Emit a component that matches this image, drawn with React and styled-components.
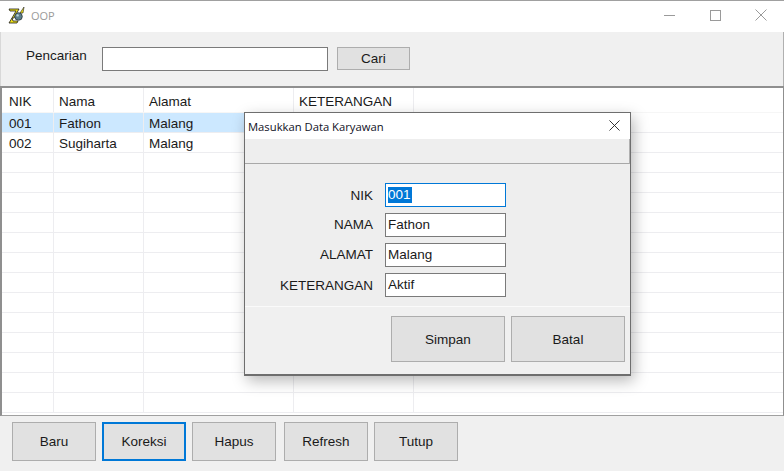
import React from "react";
import styled, { createGlobalStyle } from "styled-components";

const Global = createGlobalStyle`
  html, body { margin: 0; padding: 0; background: #fff; }
  #root { width: 784px; height: 471px; overflow: hidden; }
  * { box-sizing: border-box; }
`;

const Win = styled.div`
  position: relative;
  width: 784px;
  height: 471px;
  display: flex;
  flex-direction: column;
  background: #f0f0f0;
  border-top: 1px solid #a0a0a0;
  font: 13.5px "Liberation Sans", Arial, sans-serif;
  color: #1a1a1a;
  overflow: hidden;
`;
const TitleBar = styled.div`
  height: 31px;
  flex: none;
  background: #fff;
  display: flex;
  align-items: center;
  padding: 0 0 3px 8px;
`;
const AppTitle = styled.span`
  flex: 1;
  margin-left: 5px;
  font: 11px "Open Sans", sans-serif;
  color: #9a9a9a;
`;
const Caption = styled.button`
  width: ${(p) => p.$w || 46}px;
  height: 26px;
  flex: none;
  padding: 0;
  border: 0;
  background: transparent;
  display: flex;
  align-items: center;
  justify-content: center;
`;
const SearchBar = styled.div`
  height: 54px;
  flex: none;
  display: flex;
  align-items: flex-start;
  padding: 14px 0 0 25px;
  border-left: 1px solid #d8d8d8;
  border-right: 1px solid #b0b0b0;
`;
const SearchLabel = styled.label`
  width: 76px;
  line-height: 20px;
`;
const SearchInput = styled.div`
  width: 226px;
  height: 24px;
  margin-top: 1px;
  background: #fff;
  border: 1px solid #7a7a7a;
`;
const FlatButton = styled.button`
  width: ${(p) => p.$w}px;
  height: ${(p) => p.$h}px;
  flex: none;
  padding: 0;
  background: #e1e1e1;
  border: ${(p) => (p.$focus ? "2px solid #0078d7" : "1px solid #adadad")};
  font: 13.5px "Liberation Sans", Arial, sans-serif;
  color: #1a1a1a;
`;
const SearchButton = styled(FlatButton)`
  margin: 1px 0 0 9px;
`;
const Table = styled.div`
  height: 330px;
  flex: none;
  background: #fff;
  border-top: 2px solid #8f8f8f;
  border-left: 2px solid #8f8f8f;
  border-right: 1px solid #8f8f8f;
  border-bottom: 1px solid #a0a0a0;
  overflow: hidden;
`;
const Row = styled.div`
  display: grid;
  grid-template-columns: 52px 90px 150px 120px 1fr;
  height: ${(p) => (p.$head ? 25 : 20)}px;
  border-bottom: 1px solid ${(p) => (p.$head ? "#f6f6f6" : "#ededf0")};
`;
const Cell = styled.div`
  padding: ${(p) => (p.$head ? "4px 0 0 5px" : "2px 0 0 5px")};
  line-height: ${(p) => (p.$head ? "20px" : "18px")};
  border-right: 1px solid #ededf0;
  background: ${(p) => (p.$sel ? "#cce8ff" : "transparent")};
  white-space: nowrap;
  overflow: hidden;
  &:first-child { padding-left: 7px; }
  &:last-child { border-right: 0; background: transparent; }
`;
const BottomBar = styled.div`
  flex: 1;
  display: flex;
  align-items: flex-start;
  padding: 6px 0 0 12px;
  gap: 6px;
`;
const RefreshButton = styled(FlatButton)`
  margin-left: 2px;
`;

const Dialog = styled.div`
  position: absolute;
  left: 244px;
  top: 111px;
  width: 387px;
  height: 264px;
  background: #f0f0f0;
  border: 1px solid #6e6e6e;
  border-bottom-width: 2px;
  box-shadow: 3px 5px 14px rgba(0, 0, 0, 0.28);
  display: flex;
  flex-direction: column;
`;
const DialogTitle = styled.div`
  height: 26px;
  flex: none;
  background: #fff;
  display: flex;
  align-items: center;
  justify-content: space-between;
  padding: 0 0 0 3px;
  font: 11.25px "Open Sans", sans-serif;
  color: #10101e;
`;
const DialogClose = styled(Caption)`
  margin-bottom: 2px;
`;
const DialogBand = styled.div`
  height: 25px;
  flex: none;
  background: #eeeeee;
  border-bottom: 1px solid #a8a8a8;
  border-right: 1px solid #b0b0b0;
`;
const Form = styled.div`
  height: 143px;
  flex: none;
  padding: 19px 0 0 0;
  display: flex;
  flex-direction: column;
  gap: 6px;
  background: #eeeeee;
  border-bottom: 1px solid #fafafa;
`;
const Field = styled.div`
  display: flex;
  align-items: center;
  height: 24px;
`;
const FieldLabel = styled.label`
  width: 128px;
  text-align: right;
  padding-bottom: ${(p) => (p.$raised ? 2 : 0)}px;
`;
const FieldBox = styled.div`
  margin-left: 12px;
  width: 121px;
  height: 24px;
  background: #fff;
  border: 1px solid ${(p) => (p.$focus ? "#0078d7" : "#7a7a7a")};
  padding: 0 0 0 2px;
  line-height: 16px;
  display: flex;
  align-items: center;
`;
const Selected = styled.span`
  background: #0078d7;
  color: #fff;
  padding-right: 1px;
`;
const DialogActions = styled.div`
  flex: 1;
  display: flex;
  justify-content: flex-end;
  align-items: flex-start;
  gap: 6px;
  padding: 9px 5px 0 0;
  background: #f0f0f0;
`;

const cols = ["NIK", "Nama", "Alamat", "KETERANGAN", ""];
const rows = [
  ["001", "Fathon", "Malang", "", ""],
  ["002", "Sugiharta", "Malang", "", ""],
  ...Array.from({ length: 13 }, () => ["", "", "", "", ""]),
];
const fields = [
  ["NIK", "001", true],
  ["NAMA", "Fathon", false, true],
  ["ALAMAT", "Malang", false, true],
  ["KETERANGAN", "Aktif"],
];

const AppIcon = () => (
  <svg width="18" height="18" viewBox="0 0 18 18">
    <path d="M1 3h10l-5 9H4L8 5H2z" fill="#efe21a" stroke="#1c1c1c" strokeWidth="0.8" />
    <path d="M4 12l-3 5h8l1-2H5z" fill="#efe21a" stroke="#1c1c1c" strokeWidth="0.8" />
    <path d="M12 7l4-6-1 6z" fill="#efe21a" stroke="#1c1c1c" strokeWidth="0.6" />
    <circle cx="10.5" cy="10.5" r="3.8" fill="#5c7f8c" stroke="#2a3338" strokeWidth="0.8" />
    <circle cx="9.6" cy="9.4" r="1.2" fill="#b9d2da" />
  </svg>
);
const X = ({ color, size = 12 }) => (
  <svg width={size} height={size} viewBox="0 0 12 12">
    <path d="M.5.5l11 11M11.5.5l-11 11" stroke={color} fill="none" />
  </svg>
);

export default function App() {
  return (
    <Win>
      <Global />
      <TitleBar>
        <AppIcon />
        <AppTitle>OOP</AppTitle>
        <Caption $w={45}>
          <svg width="11" height="11" viewBox="0 0 11 11"><path d="M0 5.5h11" stroke="#9a9a9a" /></svg>
        </Caption>
        <Caption>
          <svg width="11" height="11" viewBox="0 0 11 11"><rect x=".5" y=".5" width="10" height="10" fill="none" stroke="#9a9a9a" /></svg>
        </Caption>
        <Caption>
          <X color="#9a9a9a" />
        </Caption>
      </TitleBar>
      <SearchBar>
        <SearchLabel>Pencarian</SearchLabel>
        <SearchInput />
        <SearchButton $w={73} $h={23}>Cari</SearchButton>
      </SearchBar>
      <Table>
        <Row $head>
          {cols.map((c, i) => <Cell $head key={i}>{c}</Cell>)}
        </Row>
        {rows.map((r, i) => (
          <Row key={i}>
            {r.map((c, j) => <Cell key={j} $sel={i === 0}>{c}</Cell>)}
          </Row>
        ))}
      </Table>
      <BottomBar>
        <FlatButton $w={84} $h={39}>Baru</FlatButton>
        <FlatButton $w={84} $h={39} $focus>Koreksi</FlatButton>
        <FlatButton $w={84} $h={39}>Hapus</FlatButton>
        <RefreshButton $w={84} $h={39}>Refresh</RefreshButton>
        <FlatButton $w={84} $h={39}>Tutup</FlatButton>
      </BottomBar>
      <Dialog>
        <DialogTitle>
          Masukkan Data Karyawan
          <DialogClose $w={31}><X color="#222" size={11} /></DialogClose>
        </DialogTitle>
        <DialogBand />
        <Form>
          {fields.map(([l, v, f, raised]) => (
            <Field key={l}>
              <FieldLabel $raised={raised}>{l}</FieldLabel>
              <FieldBox $focus={f}>{f ? <Selected>{v}</Selected> : v}</FieldBox>
            </Field>
          ))}
        </Form>
        <DialogActions>
          <FlatButton $w={114} $h={46}>Simpan</FlatButton>
          <FlatButton $w={114} $h={46}>Batal</FlatButton>
        </DialogActions>
      </Dialog>
    </Win>
  );
}
